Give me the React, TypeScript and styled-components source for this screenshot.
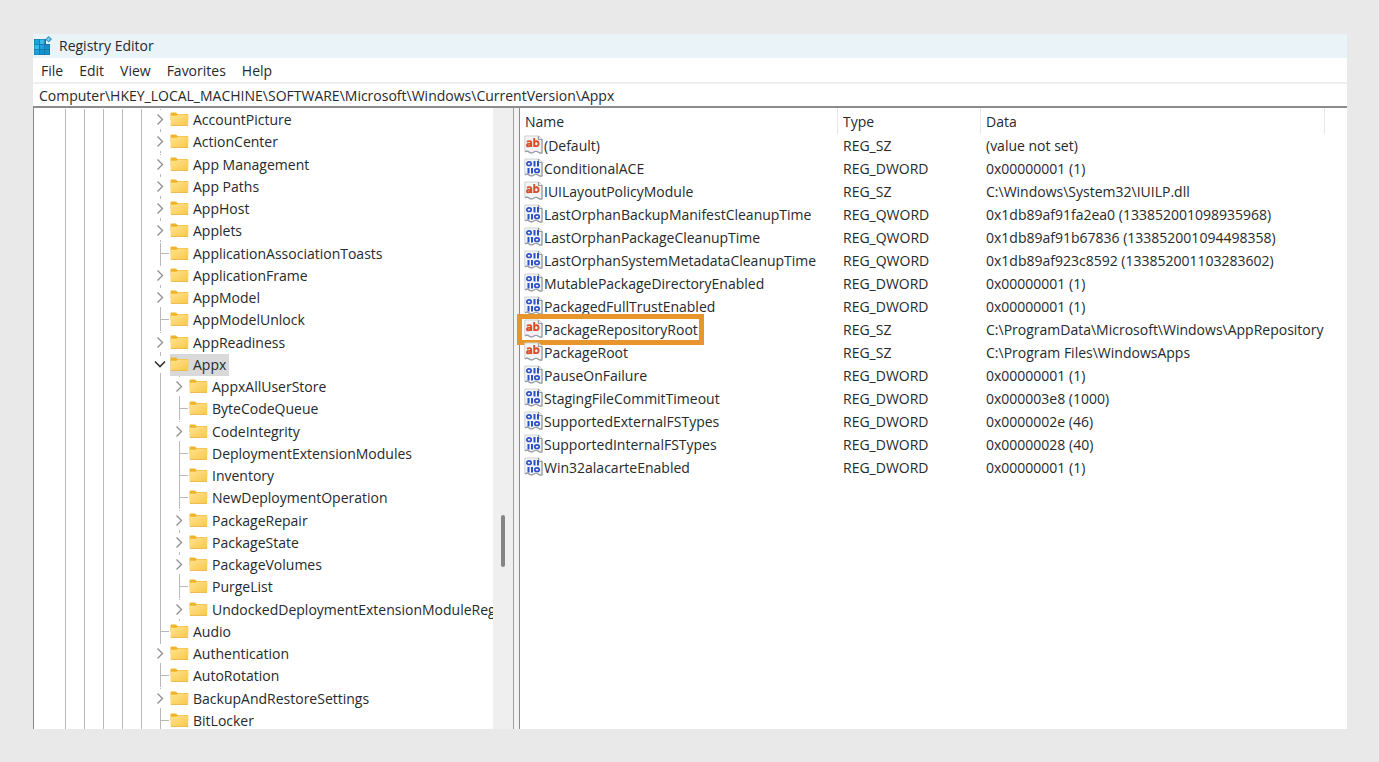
import React from "react";
import styled, { createGlobalStyle } from "styled-components";

const GlobalStyle = createGlobalStyle`
  *, *::before, *::after { box-sizing: border-box; }
  body {
    margin: 0;
    background: #e9e9e9;
    color: #262a2c;
    font-family: "Open Sans", "Noto Sans", sans-serif;
    font-size: 14px;
    line-height: 22px;
  }
`;

const Page = styled.div`
  height: 100vh;
  min-height: 300px;
  padding: 34px 32px 33px 33px;
`;

const Window = styled.main`
  display: flex;
  flex-direction: column;
  height: 100%;
  overflow: hidden;
  background: #fff;
`;

const TitleBar = styled.header`
  display: flex;
  flex: none;
  align-items: center;
  gap: 7px;
  height: 24px;
  background: #eaf4f8;
`;

const Title = styled.h1`
  margin: 0;
  font-size: 14px;
  font-weight: 400;
`;

const MenuBar = styled.nav`
  display: flex;
  flex: none;
  gap: 16px;
  height: 26px;
  padding-left: 8px;
  border-bottom: 2px solid #efefef;
`;

const MenuButton = styled.button`
  padding: 0;
  border: 0;
  background: none;
  color: inherit;
  font: inherit;
  line-height: 26px;
`;

const AddressInput = styled.input`
  flex: none;
  width: 100%;
  height: 24px;
  padding: 0 6px;
  border: 0;
  border-bottom: 2px solid #8c8c8c;
  outline: none;
  background: #fff;
  color: inherit;
  font: inherit;
`;

const Panes = styled.div`
  display: flex;
  flex: 1;
  min-height: 0;
`;

const TreePane = styled.section`
  display: flex;
  flex: none;
  width: 481px;
  border-left: 1px solid #8a8a8a;
  border-right: 1px solid #a0a0a0;
`;

const TreeScroll = styled.div`
  flex: 1;
  overflow: hidden;
`;

const TreeList = styled.ul`
  display: grid;
  grid-template-rows: repeat(28, 1fr);
  height: 624px;
  margin: 0;
  padding: 1px 0 0 22px;
  list-style: none;
`;

const TreeRow = styled.li`
  display: flex;
  align-items: center;
  min-height: 0;
  white-space: nowrap;
`;

const Guide = styled.span`
  display: flex;
  flex: none;
  align-self: stretch;
  justify-content: center;
  width: 19px;

  &::before {
    content: "";
    width: 1px;
    background: #b9b9b9;
  }
`;

const NodeSvg = styled.svg`
  display: block;
  flex: none;
`;

const TreeLabel = styled.span<{ $selected?: boolean }>`
  display: flex;
  align-items: center;
  gap: 4px;
  height: 22px;
  padding-right: 3px;
  background: ${(p) => (p.$selected ? "#d9d9d9" : "transparent")};
`;

const ScrollTrack = styled.div`
  flex: none;
  width: 20px;
  padding: 407px 0 0 8px;
  background: #efefef;
`;

const ScrollThumb = styled.div`
  width: 4px;
  height: 52px;
  border-radius: 2px;
  background: #858585;
`;

const Splitter = styled.div`
  flex: none;
  width: 5px;
  background: #f3f3f3;
`;

const ValuesPane = styled.section`
  flex: 1;
  min-width: 0;
  border-left: 1px solid #8a8a8a;
`;

const ValuesTable = styled.table`
  width: 805px;
  border-collapse: separate;
  border-spacing: 0;
  table-layout: fixed;
`;

const HeadCell = styled.th<{ $width: number }>`
  width: ${(p) => p.$width}px;
  height: 26px;
  padding: 1px 5px 0;
  border-right: 1px solid #e6e6e6;
  font-weight: 400;
  text-align: left;
`;

const Cell = styled.td`
  height: 23px;
  padding: 0 5px;
  white-space: nowrap;

  &:first-child {
    padding-left: 4px;
  }
`;

const ValueName = styled.span`
  position: relative;
  display: inline-flex;
  align-items: center;
  gap: 1px;
  height: 23px;
  vertical-align: top;
`;

const Highlight = styled.span`
  position: absolute;
  inset: -4px -6px -4px -7px;
  border: 5px solid #e8952b;
`;

const AppIcon = () => (
  <NodeSvg width="19" height="20" viewBox="0 0 19 20" aria-hidden="true">
    <path d="M1 3h12v5h4v11H1z" fill="#17719f" />
    <path d="M1.500 3.500h4.500v4.500h-4.500zM6.800 8.800h4.500v4.500H6.800zM1.500 14h4.500v4.500h-4.500z" fill="#1aa4de" />
    <path d="M6.800 3.500h4.500v4.500H6.800zM1.500 8.800h4.500v4.500h-4.500z" fill="#35bbec" />
    <path d="M6.800 14h4.500v4.500H6.800zM12 8.800h4.500v4.500H12zM12 14h4.500v4.500H12z" fill="#1690cc" />
    <path d="M15.500 0L19 3l-3.200 3.600L12.300 3.500z" fill="#3a97c4" />
    <path d="M15.500 1.600L17.300 3.100l-1.600 1.800-1.800-1.500z" fill="#7fd0ee" />
  </NodeSvg>
);

const FolderIcon = () => (
  <NodeSvg width="19" height="16" viewBox="0 0 19 16" aria-hidden="true">
    <defs>
      <linearGradient id="folder" x1="0" y1="0" x2="1" y2="1">
        <stop offset="0" stopColor="#ffe294" />
        <stop offset="1" stopColor="#f9c846" />
      </linearGradient>
    </defs>
    <path d="M.5 1.500Q.5 .5 1.500 .5h4.500l1.500 1.500h10q.7 0 .7.700V8H.5z" fill="#eeb42a" />
    <path d="M.5 3.800h6.200l1.200-1.200h9.600q.7 0 .7.700v9.700q0 .7-.7.700H1.200q-.7 0-.7-.7z" fill="url(#folder)" />
    <path d="M1 13.500h17" stroke="#e9b545" strokeWidth=".8" />
  </NodeSvg>
);

type NodeState = "closed" | "open" | "leaf";

const NodeMark = ({ state }: { state: NodeState }) => (
  <NodeSvg width="19" height="22" viewBox="0 0 19 22" fill="none" aria-hidden="true">
    {state === "leaf" && <path d="M9.500 0v22M10 10.500h8" stroke="#b9b9b9" />}
    {state === "closed" && (
      <>
        <path d="M9.500 0v1M9.500 20v2" stroke="#b9b9b9" />
        <path d="M6.500 5.500l5 5-5 5" stroke="#8d8d8d" strokeWidth="1.300" />
      </>
    )}
    {state === "open" && (
      <>
        <path d="M9.500 0v2M9.500 19v3" stroke="#b9b9b9" />
        <path d="M4 7.500l5 5 5-5" stroke="#333" strokeWidth="1.600" />
      </>
    )}
  </NodeSvg>
);

const ValueIcon = ({ text }: { text: boolean }) => (
  <NodeSvg width="19" height="21" viewBox="0 0 19 21" fill="none" aria-hidden="true">
    <path d="M.8 1h14l3.200 3v14q-2 .6-4-1t-4.500.2q-2.500 1.600-4.500-.2T.8 16.500z" fill="#f3f4f5" stroke="#cfd1d3" />
    <path d="M14.500 1v3.500H18V18q-2 .6-4-1t-4.500.2q-2.500 1.600-4.500-.2t-4 .1" stroke="#989ca0" strokeWidth="1.200" />
    {text ? (
      <g stroke="#d9502f" strokeWidth="1.900">
        <path d="M2.800 6.700q4.400-1.400 4.400.9v4.400M7.200 8.700q-4.200-.2-4.200 1.500t1.800 1q1.700 0 2.400-1.300" />
        <path d="M10.200 3v9M10.200 7.500q1-1.500 2.400-1.300 2 .3 2 2.500t-2 2.400q-1.500.2-2.400-1.100" />
      </g>
    ) : (
      <g stroke="#2c50c8" strokeWidth="2">
        <ellipse cx="5" cy="5.700" rx="2.200" ry="1.800" strokeWidth="1.700" />
        <ellipse cx="13" cy="12.700" rx="2.200" ry="1.800" strokeWidth="1.700" />
        <path d="M10.500 3v5.400M14 3v5.400M4.500 10v5.400M8 10v5.400" />
      </g>
    )}
  </NodeSvg>
);

interface TreeItem {
  name: string;
  state: NodeState;
  child?: boolean;
}

const tree: TreeItem[] = [
  { name: "AccountPicture", state: "closed" },
  { name: "ActionCenter", state: "closed" },
  { name: "App Management", state: "closed" },
  { name: "App Paths", state: "closed" },
  { name: "AppHost", state: "closed" },
  { name: "Applets", state: "closed" },
  { name: "ApplicationAssociationToasts", state: "leaf" },
  { name: "ApplicationFrame", state: "closed" },
  { name: "AppModel", state: "closed" },
  { name: "AppModelUnlock", state: "leaf" },
  { name: "AppReadiness", state: "closed" },
  { name: "Appx", state: "open" },
  { name: "AppxAllUserStore", state: "closed", child: true },
  { name: "ByteCodeQueue", state: "leaf", child: true },
  { name: "CodeIntegrity", state: "closed", child: true },
  { name: "DeploymentExtensionModules", state: "leaf", child: true },
  { name: "Inventory", state: "leaf", child: true },
  { name: "NewDeploymentOperation", state: "leaf", child: true },
  { name: "PackageRepair", state: "closed", child: true },
  { name: "PackageState", state: "closed", child: true },
  { name: "PackageVolumes", state: "closed", child: true },
  { name: "PurgeList", state: "leaf", child: true },
  { name: "UndockedDeploymentExtensionModuleRegis", state: "closed", child: true },
  { name: "Audio", state: "leaf" },
  { name: "Authentication", state: "closed" },
  { name: "AutoRotation", state: "leaf" },
  { name: "BackupAndRestoreSettings", state: "closed" },
  { name: "BitLocker", state: "leaf" },
];

const values: [string, string, string][] = [
  ["(Default)", "REG_SZ", "(value not set)"],
  ["ConditionalACE", "REG_DWORD", "0x00000001 (1)"],
  ["IUILayoutPolicyModule", "REG_SZ", "C:\\Windows\\System32\\IUILP.dll"],
  ["LastOrphanBackupManifestCleanupTime", "REG_QWORD", "0x1db89af91fa2ea0 (133852001098935968)"],
  ["LastOrphanPackageCleanupTime", "REG_QWORD", "0x1db89af91b67836 (133852001094498358)"],
  ["LastOrphanSystemMetadataCleanupTime", "REG_QWORD", "0x1db89af923c8592 (133852001103283602)"],
  ["MutablePackageDirectoryEnabled", "REG_DWORD", "0x00000001 (1)"],
  ["PackagedFullTrustEnabled", "REG_DWORD", "0x00000001 (1)"],
  ["PackageRepositoryRoot", "REG_SZ", "C:\\ProgramData\\Microsoft\\Windows\\AppRepository"],
  ["PackageRoot", "REG_SZ", "C:\\Program Files\\WindowsApps"],
  ["PauseOnFailure", "REG_DWORD", "0x00000001 (1)"],
  ["StagingFileCommitTimeout", "REG_DWORD", "0x000003e8 (1000)"],
  ["SupportedExternalFSTypes", "REG_DWORD", "0x0000002e (46)"],
  ["SupportedInternalFSTypes", "REG_DWORD", "0x00000028 (40)"],
  ["Win32alacarteEnabled", "REG_DWORD", "0x00000001 (1)"],
];

const menus = ["File", "Edit", "View", "Favorites", "Help"];
const ancestorLevels = 5;

export default function App() {
  return (
    <Page>
      <GlobalStyle />
      <Window>
        <TitleBar>
          <AppIcon />
          <Title>Registry Editor</Title>
        </TitleBar>
        <MenuBar>
          {menus.map((m) => (
            <MenuButton key={m} type="button">{m}</MenuButton>
          ))}
        </MenuBar>
        <AddressInput
          aria-label="Address"
          defaultValue={"Computer\\HKEY_LOCAL_MACHINE\\SOFTWARE\\Microsoft\\Windows\\CurrentVersion\\Appx"}
        />
        <Panes>
          <TreePane>
            <TreeScroll>
              <TreeList>
                {tree.map((item) => (
                  <TreeRow key={item.name}>
                    {Array.from({ length: ancestorLevels + (item.child ? 1 : 0) }, (_, i) => (
                      <Guide key={i} />
                    ))}
                    <NodeMark state={item.state} />
                    <TreeLabel $selected={item.state === "open"}>
                      <FolderIcon />
                      {item.name}
                    </TreeLabel>
                  </TreeRow>
                ))}
              </TreeList>
            </TreeScroll>
            <ScrollTrack>
              <ScrollThumb />
            </ScrollTrack>
          </TreePane>
          <Splitter />
          <ValuesPane>
            <ValuesTable>
              <thead>
                <tr>
                  <HeadCell $width={318}>Name</HeadCell>
                  <HeadCell $width={143}>Type</HeadCell>
                  <HeadCell $width={344}>Data</HeadCell>
                </tr>
              </thead>
              <tbody>
                {values.map(([name, type, data]) => (
                  <tr key={name}>
                    <Cell>
                      <ValueName>
                        <ValueIcon text={type === "REG_SZ"} />
                        {name}
                        {name === "PackageRepositoryRoot" && <Highlight />}
                      </ValueName>
                    </Cell>
                    <Cell>{type}</Cell>
                    <Cell>{data}</Cell>
                  </tr>
                ))}
              </tbody>
            </ValuesTable>
          </ValuesPane>
        </Panes>
      </Window>
    </Page>
  );
}
